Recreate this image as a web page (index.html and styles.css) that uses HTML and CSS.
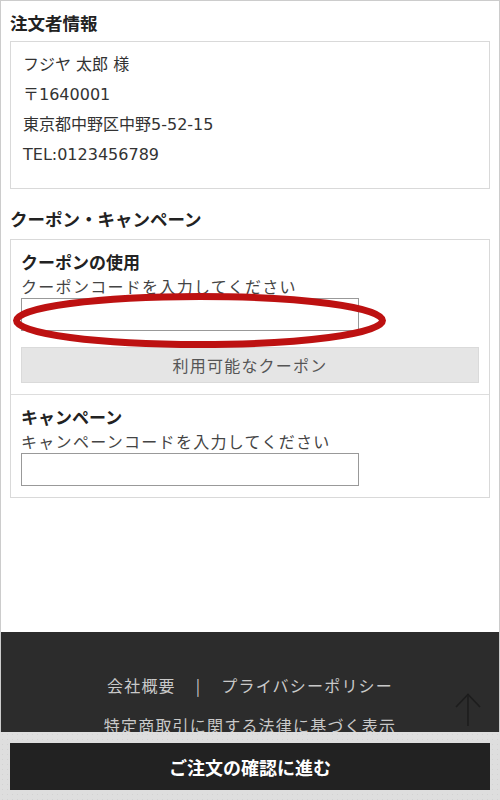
FILE: index.html
```html
<!DOCTYPE html>
<html lang="ja">
<head>
<meta charset="utf-8">
<title>注文者情報</title>
<link rel="stylesheet" href="styles.css">
</head>
<body>
<div class="page">
  <main class="content">
    <h2 class="sec-title">注文者情報</h2>
    <div class="box info">
      <p>フジヤ 太郎 様</p>
      <p>〒1640001</p>
      <p>東京都中野区中野5-52-15</p>
      <p>TEL:0123456789</p>
    </div>

    <h2 class="sec-title sec-title-second">クーポン・キャンペーン</h2>
    <div class="box coupon">
      <div class="coupon-block">
        <p class="label">クーポンの使用</p>
        <p class="hint">クーポンコードを入力してください</p>
        <input class="code-input" type="text">
        <button class="btn-available" type="button">利用可能なクーポン</button>
      </div>
      <div class="coupon-block campaign">
        <p class="label">キャンペーン</p>
        <p class="hint">キャンペーンコードを入力してください</p>
        <input class="code-input" type="text">
      </div>
    </div>
  </main>

  <footer class="site-footer">
    <nav class="footer-nav">
      <div class="footer-row">
        <a href="#">会社概要</a>
        <span class="sep">|</span>
        <a href="#">プライバシーポリシー</a>
      </div>
      <div class="footer-row">
        <a href="#">特定商取引に関する法律に基づく表示</a>
      </div>
    </nav>
    <a class="pagetop" href="#" aria-label="ページトップ">
      <svg width="26" height="34" viewBox="0 0 26 34">
        <polyline points="1,14 13,1.5 25,14" fill="none" stroke="#1d1d1d" stroke-width="1.6"/>
        <line x1="13" y1="1.5" x2="13" y2="33" stroke="#1d1d1d" stroke-width="1.6"/>
      </svg>
    </a>
  </footer>

  <div class="fixed-bar">
    <button class="btn-confirm" type="button">ご注文の確認に進む</button>
  </div>

  <svg class="annotation" width="500" height="400" viewBox="0 0 500 400">
    <ellipse cx="199.5" cy="320.5" rx="183" ry="24" fill="none" stroke="#bd1111" stroke-width="7"/>
  </svg>
</div>
</body>
</html>
```

FILE: styles.css
```css
* {
  box-sizing: border-box;
}

html, body {
  margin: 0;
  padding: 0;
}

body {
  font-family: "DejaVu Sans", "Noto Sans CJK JP", sans-serif;
  color: #333;
  background: #fff;
}

.page {
  position: relative;
  border: 1px solid #cccccc;
  border-bottom: none;
  min-height: 100vh;
  display: flex;
  flex-direction: column;
}

.content {
  padding: 0 9px;
  margin-bottom: 134px;
}

.sec-title {
  margin: 10px 0 6px;
  font-family: "Noto Sans CJK JP", sans-serif;
  font-size: 17.5px;
  line-height: 24px;
  font-weight: 700;
  color: #222;
}

.sec-title-second {
  margin-top: 18px;
  margin-bottom: 8px;
}

.box {
  border: 1px solid #d9d9d9;
  background: #fff;
}

.info {
  padding: 8px 12px 18px;
}

.info p {
  margin: 0;
  font-size: 16px;
  line-height: 30px;
  color: #333;
}

.coupon-block {
  padding: 10px 10px 11px;
  border-bottom: 1px solid #dddddd;
}

.coupon-block.campaign {
  border-bottom: none;
}

.label {
  margin: 0;
  font-family: "Noto Sans CJK JP", sans-serif;
  font-size: 17px;
  line-height: 24px;
  font-weight: 700;
  color: #222;
}

.hint {
  margin: 0;
  font-family: "Noto Sans CJK JP", sans-serif;
  font-size: 16px;
  letter-spacing: 1.3px;
  line-height: 24px;
  color: #444;
}

.code-input {
  display: block;
  width: 338px;
  height: 33px;
  margin: 0;
  padding: 0 6px;
  border: 1px solid #999;
  border-radius: 0;
  background: #fff;
  font-size: 16px;
  outline: none;
}

.btn-available {
  display: block;
  width: 100%;
  height: 36px;
  margin-top: 16px;
  padding: 0;
  border: 1px solid #dadada;
  border-radius: 0;
  background: #e5e5e5;
  font-family: "Noto Sans CJK JP", sans-serif;
  font-size: 16px;
  letter-spacing: 1.2px;
  color: #555;
}

.site-footer {
  position: relative;
  flex: 1;
  background: #2c2c2c;
  padding-top: 41px;
  padding-bottom: 20px;
}

.footer-nav {
  display: flex;
  flex-direction: column;
  align-items: center;
  gap: 16px;
}

.footer-row {
  display: flex;
  align-items: center;
  gap: 20px;
  font-family: "Noto Sans CJK JP", sans-serif;
  font-size: 16px;
  letter-spacing: 1.2px;
  line-height: 24px;
}

.footer-row a {
  color: #c9c9c9;
  text-decoration: none;
}

.sep {
  color: #c9c9c9;
}

.pagetop {
  position: absolute;
  top: 61px;
  left: 454px;
  display: block;
  width: 26px;
  height: 34px;
}

.pagetop svg {
  display: block;
}

.fixed-bar {
  position: fixed;
  left: 0;
  right: 0;
  bottom: 0;
  height: 68px;
  padding: 11px 10px 10px;
  background-color: #dedede;
  background-image: radial-gradient(#d2d2d2 0.8px, transparent 0.9px);
  background-size: 5px 5px;
}

.btn-confirm {
  display: block;
  width: 100%;
  height: 47px;
  margin: 0;
  padding: 0;
  border: none;
  border-radius: 0;
  background: #222;
  color: #fff;
  font-family: "Noto Sans CJK JP", sans-serif;
  font-size: 18px;
  font-weight: 700;
}

.annotation {
  position: absolute;
  left: -1px;
  top: -1px;
  pointer-events: none;
}
```
